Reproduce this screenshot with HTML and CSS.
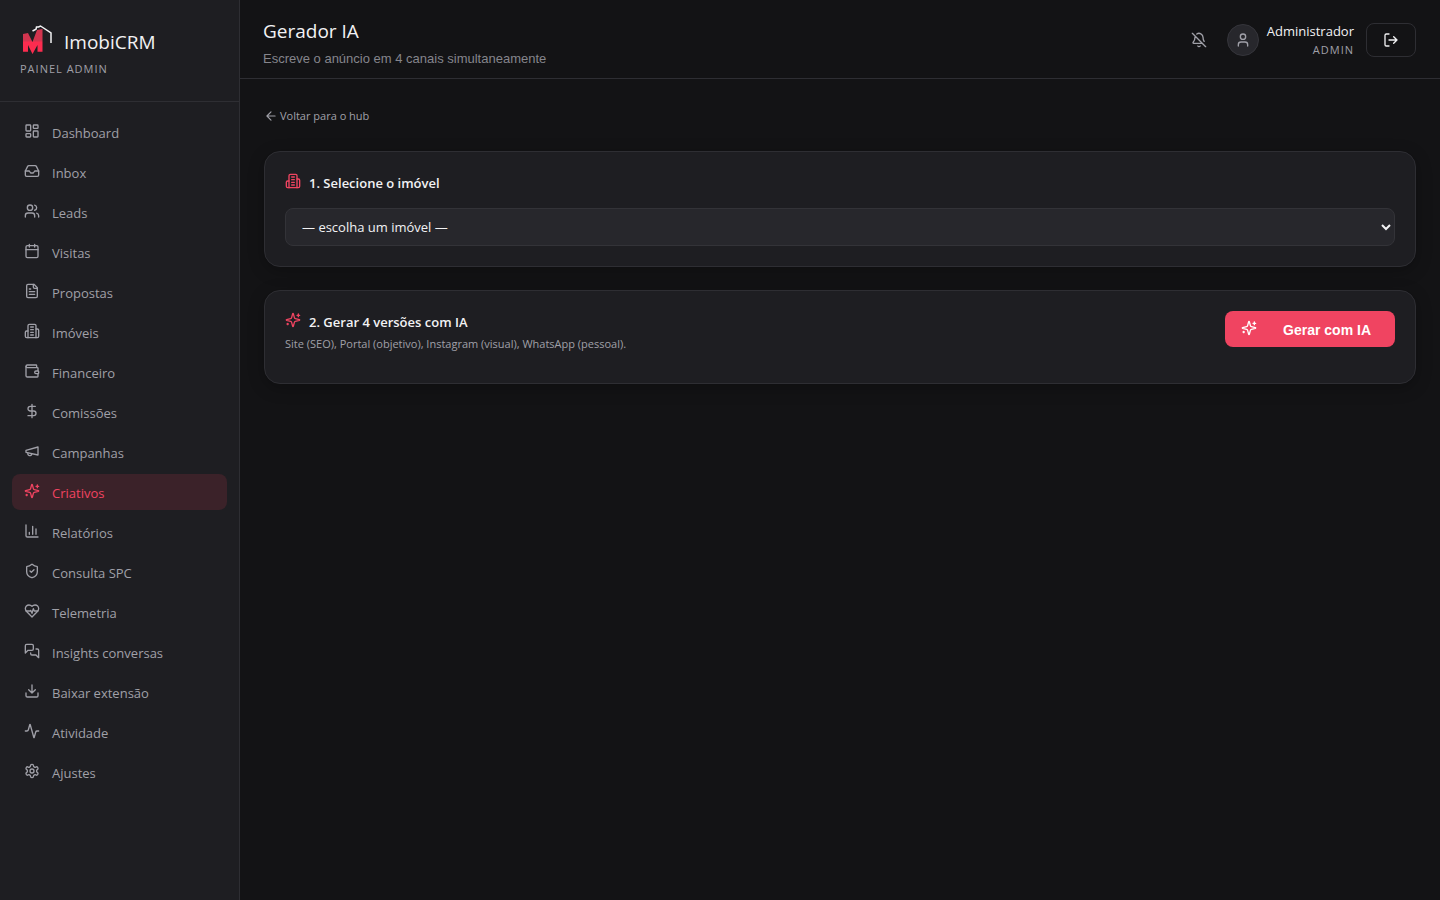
FILE: index.html
```html
<!DOCTYPE html>
<html lang="pt-BR">
<head>
<meta charset="utf-8">
<title>Gerador IA · ImobiCRM</title>
<link rel="stylesheet" href="styles.css">
</head>
<body>
<svg class="sprite" aria-hidden="true">
  <symbol id="building" viewBox="0 0 24 24"><path d="M6 22V4a2 2 0 0 1 2-2h8a2 2 0 0 1 2 2v18Z"/><path d="M6 12H4a2 2 0 0 0-2 2v6a2 2 0 0 0 2 2h2"/><path d="M18 9h2a2 2 0 0 1 2 2v9a2 2 0 0 1-2 2h-2"/><path d="M10 6h4M10 10h4M10 14h4M10 18h4"/></symbol>
  <symbol id="sparkles" viewBox="0 0 24 24"><path d="M9.937 15.5A2 2 0 0 0 8.5 14.063l-6.135-1.582a.5.5 0 0 1 0-.962L8.5 9.936A2 2 0 0 0 9.937 8.5l1.582-6.135a.5.5 0 0 1 .963 0L14.063 8.5A2 2 0 0 0 15.5 9.937l6.135 1.581a.5.5 0 0 1 0 .964L15.5 14.063a2 2 0 0 0-1.437 1.437l-1.582 6.135a.5.5 0 0 1-.963 0z"/><path d="M20 3v4M22 5h-4M4 17v2M5 18H3"/></symbol>
</svg>
<div class="app">
  <aside class="sidebar">
    <div class="brand">
      <div class="brand-row">
        <svg class="logo" viewBox="0 0 32 32" aria-hidden="true">
          <defs><linearGradient id="mark" x1="0" y1="0" x2="0" y2="1"><stop offset="0.46" stop-color="#d2354f"/><stop offset="0.54" stop-color="#fb2c4f"/></linearGradient></defs>
          <path fill="url(#mark)" d="M3 10l5-1 4.500 9L17 6l5.500-1v22.700h-5V21l-5 9L8 21v6.700H3z"/>
          <path fill="none" stroke="#f2f2f4" stroke-width="1.500" d="M12.500 7L16 5.200 16.500 3h2l2-1L31 9v10"/>
        </svg>
        <span class="brand-name">ImobiCRM</span>
      </div>
      <div class="caps">PAINEL ADMIN</div>
    </div>
    <nav class="nav">
      <a href="#"><svg class="icon" viewBox="0 0 24 24"><rect width="7" height="9" x="3" y="3" rx="1"/><rect width="7" height="5" x="14" y="3" rx="1"/><rect width="7" height="9" x="14" y="12" rx="1"/><rect width="7" height="5" x="3" y="16" rx="1"/></svg><span>Dashboard</span></a>
      <a href="#"><svg class="icon" viewBox="0 0 24 24"><path d="M22 12h-6l-2 3h-4l-2-3H2"/><path d="M5.450 5.110 2 12v6a2 2 0 0 0 2 2h16a2 2 0 0 0 2-2v-6l-3.450-6.890A2 2 0 0 0 16.760 4H7.240a2 2 0 0 0-1.790 1.110z"/></svg><span>Inbox</span></a>
      <a href="#"><svg class="icon" viewBox="0 0 24 24"><path d="M16 21v-2a4 4 0 0 0-4-4H6a4 4 0 0 0-4 4v2"/><circle cx="9" cy="7" r="4"/><path d="M22 21v-2a4 4 0 0 0-3-3.870M16 3.130a4 4 0 0 1 0 7.750"/></svg><span>Leads</span></a>
      <a href="#"><svg class="icon" viewBox="0 0 24 24"><path d="M8 2v4M16 2v4M3 10h18"/><rect width="18" height="18" x="3" y="4" rx="2"/></svg><span>Visitas</span></a>
      <a href="#"><svg class="icon" viewBox="0 0 24 24"><path d="M15 2H6a2 2 0 0 0-2 2v16a2 2 0 0 0 2 2h12a2 2 0 0 0 2-2V7Z"/><path d="M14 2v4a2 2 0 0 0 2 2h4M10 9H8M16 13H8M16 17H8"/></svg><span>Propostas</span></a>
      <a href="#"><svg class="icon"><use href="#building"/></svg><span>Imóveis</span></a>
      <a href="#"><svg class="icon" viewBox="0 0 24 24"><path d="M19 7V4a1 1 0 0 0-1-1H5a2 2 0 0 0 0 4h15a1 1 0 0 1 1 1v4h-3a2 2 0 0 0 0 4h3a1 1 0 0 0 1-1v-2a1 1 0 0 0-1-1"/><path d="M3 5v14a2 2 0 0 0 2 2h15a1 1 0 0 0 1-1v-4"/></svg><span>Financeiro</span></a>
      <a href="#"><svg class="icon" viewBox="0 0 24 24"><path d="M12 2v20M17 5H9.500a3.500 3.500 0 0 0 0 7h5a3.500 3.500 0 0 1 0 7H6"/></svg><span>Comissões</span></a>
      <a href="#"><svg class="icon" viewBox="0 0 24 24"><path d="m3 11 18-5v12L3 14v-3z"/><path d="M11.600 16.800a3 3 0 1 1-5.800-1.600"/></svg><span>Campanhas</span></a>
      <a href="#" class="active" aria-current="page"><svg class="icon"><use href="#sparkles"/></svg><span>Criativos</span></a>
      <a href="#"><svg class="icon" viewBox="0 0 24 24"><path d="M3 3v16a2 2 0 0 0 2 2h16M18 17V9M13 17V5M8 17v-3"/></svg><span>Relatórios</span></a>
      <a href="#"><svg class="icon" viewBox="0 0 24 24"><path d="M20 13c0 5-3.500 7.500-7.660 8.950a1 1 0 0 1-.67-.01C7.500 20.500 4 18 4 13V6a1 1 0 0 1 1-1c2 0 4.500-1.200 6.240-2.720a1.170 1.170 0 0 1 1.520 0C14.510 3.810 17 5 19 5a1 1 0 0 1 1 1z"/><path d="m9 12 2 2 4-4"/></svg><span>Consulta SPC</span></a>
      <a href="#"><svg class="icon" viewBox="0 0 24 24"><path d="M19 14c1.490-1.460 3-3.210 3-5.500A5.500 5.500 0 0 0 16.500 3c-1.760 0-3 .5-4.500 2-1.500-1.500-2.740-2-4.500-2A5.500 5.500 0 0 0 2 8.500c0 2.300 1.500 4.050 3 5.500l7 7Z"/><path d="M3.220 12H9.500l.5-1 2 4.500 2-7 1.500 3.500h5.270"/></svg><span>Telemetria</span></a>
      <a href="#"><svg class="icon" viewBox="0 0 24 24"><path d="M14 9a2 2 0 0 1-2 2H6l-4 4V4a2 2 0 0 1 2-2h8a2 2 0 0 1 2 2z"/><path d="M18 9h2a2 2 0 0 1 2 2v11l-4-4h-6a2 2 0 0 1-2-2v-1"/></svg><span>Insights conversas</span></a>
      <a href="#"><svg class="icon" viewBox="0 0 24 24"><path d="M21 15v4a2 2 0 0 1-2 2H5a2 2 0 0 1-2-2v-4M7 10l5 5 5-5M12 15V3"/></svg><span>Baixar extensão</span></a>
      <a href="#"><svg class="icon" viewBox="0 0 24 24"><path d="M22 12h-2.480a2 2 0 0 0-1.930 1.460l-2.350 8.360a.25.25 0 0 1-.48 0L9.240 2.180a.25.25 0 0 0-.48 0l-2.350 8.360A2 2 0 0 1 4.490 12H2"/></svg><span>Atividade</span></a>
      <a href="#"><svg class="icon" viewBox="0 0 24 24"><path d="M12.220 2h-.44a2 2 0 0 0-2 2v.18a2 2 0 0 1-1 1.730l-.43.25a2 2 0 0 1-2 0l-.15-.08a2 2 0 0 0-2.730.73l-.22.38a2 2 0 0 0 .73 2.730l.15.1a2 2 0 0 1 1 1.720v.51a2 2 0 0 1-1 1.740l-.15.09a2 2 0 0 0-.73 2.730l.22.38a2 2 0 0 0 2.730.73l.15-.08a2 2 0 0 1 2 0l.43.25a2 2 0 0 1 1 1.730V20a2 2 0 0 0 2 2h.44a2 2 0 0 0 2-2v-.18a2 2 0 0 1 1-1.730l.43-.25a2 2 0 0 1 2 0l.15.08a2 2 0 0 0 2.730-.73l.22-.39a2 2 0 0 0-.73-2.730l-.15-.08a2 2 0 0 1-1-1.740v-.5a2 2 0 0 1 1-1.740l.15-.09a2 2 0 0 0 .73-2.730l-.22-.38a2 2 0 0 0-2.730-.73l-.15.08a2 2 0 0 1-2 0l-.43-.25a2 2 0 0 1-1-1.730V4a2 2 0 0 0-2-2z"/><circle cx="12" cy="12" r="3"/></svg><span>Ajustes</span></a>
    </nav>
  </aside>

  <div class="page">
    <header class="topbar">
      <div class="heading">
        <h1>Gerador IA</h1>
        <p>Escreve o anúncio em 4 canais simultaneamente</p>
      </div>
      <div class="account">
        <button class="bell" type="button" aria-label="Notificações desativadas"><svg class="icon" viewBox="0 0 24 24"><path d="M10.268 21a2 2 0 0 0 3.464 0M17 17H4a1 1 0 0 1-.74-1.673C4.590 13.956 6 12.499 6 8a6 6 0 0 1 .258-1.742M2 2l20 20M8.668 3.010A6 6 0 0 1 18 8c0 2.687.77 4.653 1.707 6.050"/></svg></button>
        <div class="user">
          <span class="avatar"><svg class="icon" viewBox="0 0 24 24"><path d="M19 21v-2a4 4 0 0 0-4-4H9a4 4 0 0 0-4 4v2"/><circle cx="12" cy="7" r="4"/></svg></span>
          <div class="user-text">
            <span class="user-name">Administrador</span>
            <span class="caps">ADMIN</span>
          </div>
        </div>
        <button class="logout" type="button" aria-label="Sair"><svg class="icon" viewBox="0 0 24 24"><path d="M9 21H5a2 2 0 0 1-2-2V5a2 2 0 0 1 2-2h4M16 17l5-5-5-5M21 12H9"/></svg></button>
      </div>
    </header>

    <main class="content">
      <a class="back" href="#"><svg class="icon" viewBox="0 0 24 24"><path d="m12 19-7-7 7-7M19 12H5"/></svg><span>Voltar para o hub</span></a>

      <section class="card">
        <label class="card-title" for="imovel"><svg class="icon"><use href="#building"/></svg><span>1. Selecione o imóvel</span></label>
        <select id="imovel" class="select"><option>— escolha um imóvel —</option></select>
      </section>

      <section class="card card-row">
        <div class="card-text">
          <h2 class="card-title"><svg class="icon"><use href="#sparkles"/></svg><span>2. Gerar 4 versões com IA</span></h2>
          <p>Site (SEO), Portal (objetivo), Instagram (visual), WhatsApp (pessoal).</p>
        </div>
        <button class="primary" type="button"><svg class="icon"><use href="#sparkles"/></svg><span>Gerar com IA</span></button>
      </section>
    </main>
  </div>
</div>
</body>
</html>
```
FILE: styles.css
```css
:root {
  color-scheme: dark;
  --bg: #131315;
  --surface: #1e1e22;
  --raised: #27272c;
  --line: #2e2e33;
  --text: #f2f2f4;
  --muted: #a0a0a8;
  --accent: #f04461;
}

* { box-sizing: border-box; }

body {
  margin: 0;
  background: var(--bg);
  color: var(--text);
  font-family: "Open Sans", "Noto Sans", sans-serif;
  font-size: 13px;
  line-height: 20px;
}

h1, h2, p { margin: 0; }
a { color: inherit; text-decoration: none; }
button { font: inherit; color: inherit; cursor: pointer; }

.sprite { display: none; }

.icon {
  width: 16px;
  height: 16px;
  flex: none;
  fill: none;
  stroke: currentColor;
  stroke-width: 2;
  stroke-linecap: round;
  stroke-linejoin: round;
}

.app { display: flex; min-height: 100vh; }

.sidebar {
  width: 240px;
  flex: none;
  background: var(--surface);
  border-right: 1px solid var(--line);
}

.brand {
  padding: 24px 20px;
  border-bottom: 1px solid var(--line);
}

.brand-row {
  display: flex;
  align-items: flex-end;
  gap: 12px;
  margin-bottom: 4px;
}

.logo { width: 32px; height: 32px; }

.brand-name { font-size: 19px; line-height: 28px; }

.caps {
  color: var(--muted);
  font-size: 11px;
  line-height: 17px;
  letter-spacing: 1px;
}

.nav {
  display: flex;
  flex-direction: column;
  gap: 4px;
  padding: 12px;
}

.nav a {
  display: flex;
  gap: 12px;
  padding: 9px 12px 7px;
  border-radius: 8px;
  color: var(--muted);
}

.nav .active { background: #3b2229; color: var(--accent); }

.page { flex: 1; min-width: 0; }

.topbar {
  display: flex;
  justify-content: space-between;
  align-items: center;
  padding: 12px 24px 11px 23px;
  border-bottom: 1px solid var(--line);
}

.heading h1 { font-size: 19px; font-weight: 400; line-height: 38px; }

.heading p {
  color: #85858c;
  font-family: "Liberation Sans", Arial, sans-serif;
  font-size: 13px;
  line-height: 17px;
}

.account { display: flex; align-items: center; gap: 12px; }

.bell {
  display: flex;
  padding: 8px;
  border: 0;
  background: none;
  color: var(--muted);
}

.user { display: flex; align-items: center; gap: 8px; }

.avatar {
  display: grid;
  place-items: center;
  width: 32px;
  height: 32px;
  border: 1px solid #35353b;
  border-radius: 50%;
  background: var(--raised);
  color: var(--muted);
}

.user-text { display: flex; flex-direction: column; text-align: right; }

.logout {
  display: flex;
  padding: 8px 16px;
  border: 1px solid var(--line);
  border-radius: 8px;
  background: none;
}

.content {
  display: flex;
  flex-direction: column;
  gap: 23px;
  padding: 24px;
}

.back {
  display: flex;
  align-items: center;
  align-self: flex-start;
  gap: 2px;
  color: var(--muted);
  font-size: 11px;
  line-height: 25px;
}

.back .icon { width: 14px; height: 14px; }

.card {
  padding: 20px;
  border: 1px solid var(--line);
  border-radius: 16px;
  background: var(--surface);
  box-shadow: 0 4px 16px rgba(0, 0, 0, 0.25);
}

.card-title {
  display: flex;
  gap: 8px;
  padding: 1px 0 2px;
  font-size: 13px;
  font-weight: 600;
  line-height: 20px;
}

.card-title .icon { color: var(--accent); }

.select {
  display: block;
  width: 100%;
  height: 38px;
  margin-top: 13px;
  padding: 0 12px;
  border: 1px solid #333338;
  border-radius: 8px;
  background: var(--raised);
  color: var(--text);
  font: inherit;
}

.card-row {
  display: flex;
  justify-content: space-between;
  align-items: flex-start;
}

.card-text p {
  margin-bottom: 9px;
  color: var(--muted);
  font-size: 11px;
  line-height: 20px;
}

.primary {
  display: flex;
  gap: 26px;
  padding: 9px 24px 7px 16px;
  border: 0;
  border-radius: 8px;
  background: var(--accent);
  color: #fff;
  font-family: "Liberation Sans", Arial, sans-serif;
  font-size: 14px;
  font-weight: 700;
  line-height: 20px;
}
```
